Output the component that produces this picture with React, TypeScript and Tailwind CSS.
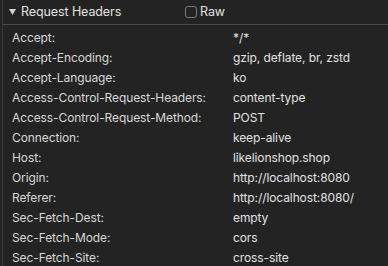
const headers: [string, string][] = [
  ['Accept:', '*/*'],
  ['Accept-Encoding:', 'gzip, deflate, br, zstd'],
  ['Accept-Language:', 'ko'],
  ['Access-Control-Request-Headers:', 'content-type'],
  ['Access-Control-Request-Method:', 'POST'],
  ['Connection:', 'keep-alive'],
  ['Host:', 'likelionshop.shop'],
  ['Origin:', 'http://localhost:8080'],
  ['Referer:', 'http://localhost:8080/'],
  ['Sec-Fetch-Dest:', 'empty'],
  ['Sec-Fetch-Mode:', 'cors'],
  ['Sec-Fetch-Site:', 'cross-site'],
];

export default function App() {
  return (
    <div className="h-[266px] w-[388px] overflow-hidden bg-[#232323] font-['Inter',sans-serif] text-[12px] tracking-[-0.1px] text-[#e2e2e2]">
      <div className="ml-[2px] h-full border-l border-[#3b3b3b]">
        <div className="flex h-[25px] items-center border-b border-[#4b4b4b]">
          <svg className="ml-[6px] mr-[5px]" width="7" height="6" viewBox="0 0 7 6">
            <path d="M0 0h7L3.5 6z" fill="#d0d0d0" />
          </svg>
          <span className="w-[164px] text-[12.5px]">Request Headers</span>
          <span className="h-[12px] w-[12px] rounded-[3px] border border-[#7a7a7a]" />
          <span className="ml-[3px] text-[12.5px]">Raw</span>
        </div>
        <div className="pt-[3px]">
          {headers.map(([k, v]) => (
            <div key={k} className="flex h-[20px] items-center">
              <span className="ml-[9px] w-[221px] shrink-0 text-[#d8d8d8]">{k}</span>
              <span>{v}</span>
            </div>
          ))}
        </div>
      </div>
    </div>
  );
}
